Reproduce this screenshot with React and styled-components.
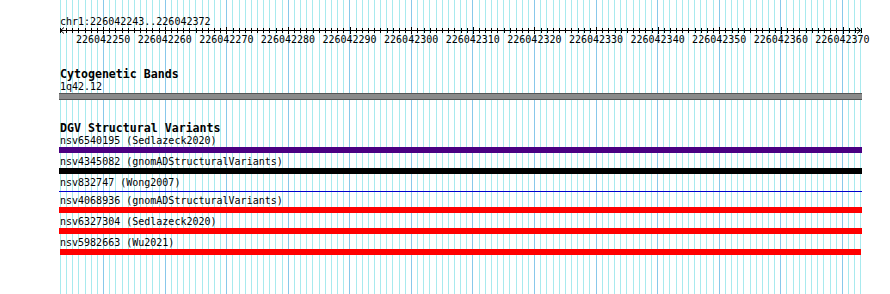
import React from "react";
import styled, { createGlobalStyle } from "styled-components";

const START = 226042243;
const END = 226042372;
const BASES = END - START + 1; // 130
const VIEW_W = 802;
const PX = (VIEW_W - 1) / BASES; // px per base

const GlobalStyle = createGlobalStyle`
  html, body { margin: 0; padding: 0; background: #ffffff; }
  body { font-family: "DejaVu Sans Mono", "Liberation Mono", monospace; color: #000; }
`;

const Page = styled.div`
  height: 100vh;
  padding-left: 60px;
  overflow: hidden;
  box-sizing: border-box;
`;

const Canvas = styled.div`
  position: relative;
  width: ${VIEW_W}px;
  height: 100%;
`;

const GridLayer = styled.div`
  position: absolute;
  inset: 0;
  display: flex;
  justify-content: space-between;
  z-index: 0;
`;

const GridLine = styled.div`
  flex: 0 0 1px;
  width: 1px;
  height: 100%;
  background: ${(p) => (p.$major ? "#88c8ea" : "#a8eaee")};
`;

const Content = styled.div`
  position: relative;
  z-index: 1;
  padding-top: 16px;
`;

const LocLabel = styled.div`
  font-size: 10px;
  line-height: 11px;
  white-space: nowrap;
`;

const RulerSvg = styled.svg`
  display: block;
  overflow: visible;
`;

const TickLabels = styled.div`
  display: flex;
  padding-left: ${PX * 7 - (PX * 10) / 2}px;
  font-size: 10px;
  line-height: 11px;
  white-space: nowrap;
`;

const TickLabel = styled.div`
  flex: 0 0 ${PX * 10}px;
  text-align: center;
`;

const Track = styled.section`
  margin-top: ${(p) => p.$gap}px;
`;

const TrackTitle = styled.div`
  font-size: 11.6px;
  font-weight: bold;
  line-height: 14px;
  white-space: nowrap;
`;

const FeatureLabel = styled.div`
  font-size: 10px;
  line-height: 12px;
  white-space: nowrap;
`;

const Feature = styled.div`
  margin-bottom: 3px;
`;

const Cytoband = styled.div`
  height: 5px;
  margin-left: -1px;
  width: ${VIEW_W + 1}px;
  background: #8a8a8a;
  border-top: 1px solid #555;
  border-bottom: 1px solid #555;
`;

const Glyph = styled.div`
  height: ${(p) => p.$h}px;
  margin-top: ${(p) => Math.floor((6 - p.$h) / 2)}px;
  margin-bottom: ${(p) => Math.ceil((6 - p.$h) / 2)}px;
  margin-left: ${(p) => (p.$inset ? 0 : -1)}px;
  width: ${(p) => (p.$inset ? VIEW_W - 1 : VIEW_W + 1)}px;
  background: ${(p) => p.$color};
`;

const variants = [
  { label: "nsv6540195 (Sedlazeck2020)", color: "#4b0082", h: 6 },
  { label: "nsv4345082 (gnomADStructuralVariants)", color: "#000000", h: 6 },
  { label: "nsv832747 (Wong2007)", color: "#0000cc", h: 1 },
  { label: "nsv4068936 (gnomADStructuralVariants)", color: "#ff0000", h: 6 },
  { label: "nsv6327304 (Sedlazeck2020)", color: "#ff0000", h: 6 },
  { label: "nsv5982663 (Wu2021)", color: "#ff0000", h: 6, inset: true },
];

function Ruler() {
  const ticks = [];
  for (let i = 0; i <= BASES; i++) {
    const x = Math.round(i * PX) + 0.5;
    const major = (START + i) % 10 === 0;
    ticks.push(
      <line key={i} x1={x} x2={x} y1={major ? 0 : 1} y2={major ? 7 : 6} stroke="#000" strokeWidth="1" />
    );
  }
  const end = VIEW_W - 1;
  return (
    <RulerSvg width={VIEW_W} height="7" viewBox={`0 0 ${VIEW_W} 7`} shapeRendering="crispEdges">
      <line x1="0" x2={end} y1="3.5" y2="3.5" stroke="#000" strokeWidth="1" />
      {ticks}
      <polyline points="4,0.5 0.5,3.5 4,6.5" fill="none" stroke="#000" strokeWidth="1" shapeRendering="auto" />
      <polyline points={`${end - 4},0.5 ${end - 0.5},3.5 ${end - 4},6.5`} fill="none" stroke="#000" strokeWidth="1" shapeRendering="auto" />
    </RulerSvg>
  );
}

export default function App() {
  const lines = [];
  for (let i = 0; i <= BASES; i++) {
    lines.push(<GridLine key={i} $major={(START + i) % 10 === 0} />);
  }
  const labels = [];
  for (let v = 226042250; v <= 226042370; v += 10) labels.push(v);

  return (
    <>
      <GlobalStyle />
      <Page>
        <Canvas>
          <GridLayer>{lines}</GridLayer>
          <Content>
            <LocLabel>chr1:226042243..226042372</LocLabel>
            <Ruler />
            <TickLabels>
              {labels.map((v) => (
                <TickLabel key={v}>{v}</TickLabel>
              ))}
            </TickLabels>

            <Track $gap={22}>
              <TrackTitle>Cytogenetic Bands</TrackTitle>
              <FeatureLabel>1q42.12</FeatureLabel>
              <Cytoband />
            </Track>

            <Track $gap={21}>
              <TrackTitle>DGV Structural Variants</TrackTitle>
              {variants.map((f) => (
                <Feature key={f.label}>
                  <FeatureLabel>{f.label}</FeatureLabel>
                  <Glyph $color={f.color} $h={f.h} $inset={f.inset} />
                </Feature>
              ))}
            </Track>
          </Content>
        </Canvas>
      </Page>
    </>
  );
}
